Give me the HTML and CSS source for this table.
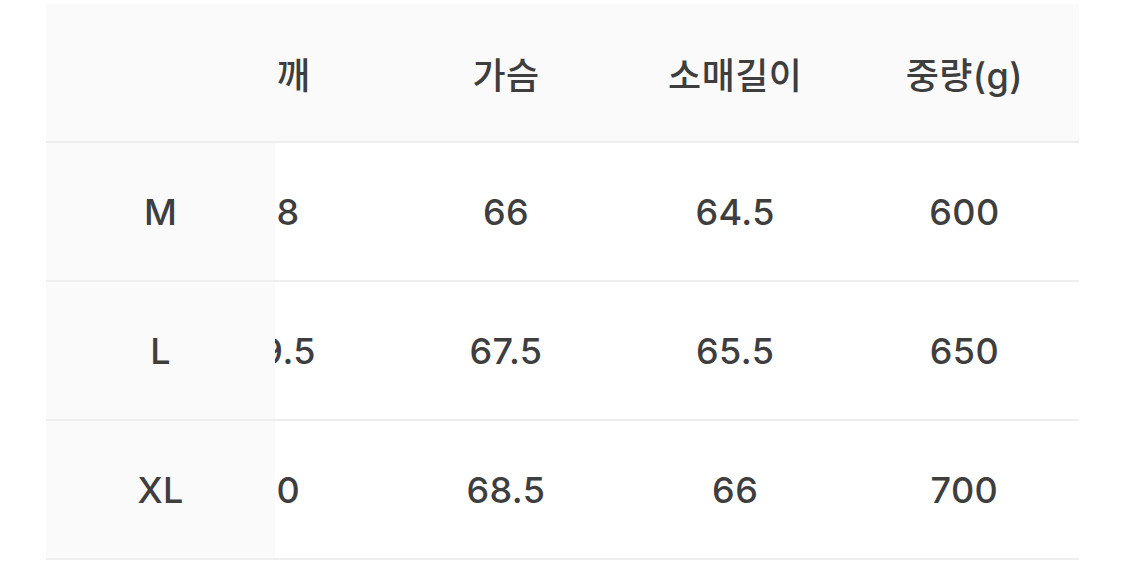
FILE: index.html
```html
<!DOCTYPE html>
<html lang="ko">
<head>
<meta charset="utf-8">
<title>사이즈표</title>
<link rel="stylesheet" href="styles.css">
</head>
<body>
<div class="page">
  <div class="scroller">
    <table class="size-table">
      <thead>
        <tr>
          <th class="sticky"></th>
          <th>어깨</th>
          <th>가슴</th>
          <th>소매길이</th>
          <th>중량(g)</th>
        </tr>
      </thead>
      <tbody>
        <tr>
          <td class="sticky">M</td>
          <td>58</td>
          <td>66</td>
          <td>64.5</td>
          <td>600</td>
        </tr>
        <tr>
          <td class="sticky">L</td>
          <td>59.5</td>
          <td>67.5</td>
          <td>65.5</td>
          <td>650</td>
        </tr>
        <tr>
          <td class="sticky">XL</td>
          <td>60</td>
          <td>68.5</td>
          <td>66</td>
          <td>700</td>
        </tr>
      </tbody>
    </table>
  </div>
</div>
</body>
</html>
```

FILE: styles.css
```css
html, body {
  margin: 0;
  padding: 0;
  background: #ffffff;
}

.page {
  padding: 4px 46px 0 46px;
}

.scroller {
  direction: rtl;
  overflow-x: auto;
  overflow-y: hidden;
  scrollbar-width: none;
}

.scroller::-webkit-scrollbar {
  display: none;
}

.size-table {
  direction: ltr;
  width: 1146px;
  table-layout: fixed;
  border-collapse: separate;
  border-spacing: 0;
  font-family: "Inter", "Noto Sans CJK KR", sans-serif;
  font-weight: 500;
  font-size: 36px;
  letter-spacing: 0.4px;
  color: #3e3e3e;
}

.size-table th,
.size-table td {
  width: 229.2px;
  height: 137px;
  padding: 0;
  text-align: center;
  vertical-align: middle;
  border-bottom: 2px solid #eeeeee;
  background: #ffffff;
}

.size-table th {
  font-weight: 500;
  background: #fafafa;
}

.size-table .sticky {
  position: sticky;
  left: 0;
  z-index: 1;
  background: #fafafa;
}
```
